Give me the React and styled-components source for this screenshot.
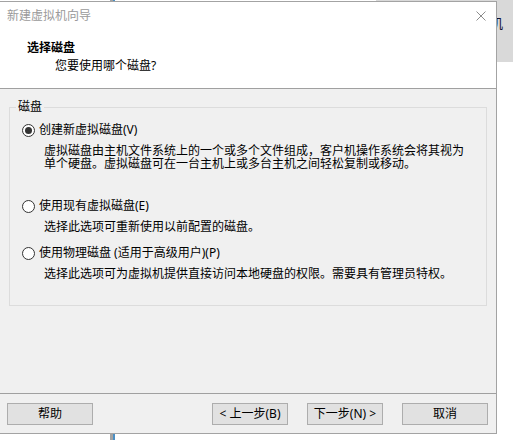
import React from 'react';
import styled, { createGlobalStyle } from 'styled-components';

const GlobalStyle = createGlobalStyle`
  html, body {
    margin: 0;
    padding: 0;
    background: #ffffff;
  }
  body {
    font-family: "Noto Sans", "Noto Sans CJK SC", sans-serif;
    font-size: 12px;
    color: #000;
  }
`;

const Desktop = styled.div`
  position: relative;
  width: 513px;
  height: 440px;
  overflow: hidden;
  background: #ffffff;
`;

// window behind the dialog, top right
const BackWindow = styled.div`
  position: absolute;
  left: 376px;
  top: 0;
  width: 137px;
  height: 62px;
  box-sizing: border-box;
  padding: 15px 0 0 114px;
  background: #d9d9d9;
`;

const BackLabel = styled.span`
  font-size: 13px;
  line-height: 16px;
  color: #101030;
`;

const Splitter = styled.div`
  position: absolute;
  left: 110px;
  top: 0;
  width: 3px;
  height: 440px;
  background: #a3a3a3;
  border-right: 2px solid #4b8fc4;
`;

const Dialog = styled.div`
  position: absolute;
  left: 0;
  top: 1px;
  width: 497px;
  height: 433px;
  box-sizing: border-box;
  border: 1px solid #a3a3a3;
  border-left: none;
  background: #f0f0f0;
  display: flex;
  flex-direction: column;
`;

const Header = styled.div`
  height: 87px;
  box-sizing: border-box;
  background: #ffffff;
  border-bottom: 1px solid #a0a0a0;
`;

const TitleRow = styled.div`
  height: 28px;
  display: flex;
  align-items: center;
  justify-content: space-between;
  padding: 0 10px 0 7px;
`;

const Title = styled.span`
  color: #9a9a9a;
  line-height: 28px;
`;

const Heading = styled.div`
  margin: 10px 0 0 27px;
  font-weight: 700;
  line-height: 16px;
`;

const SubHeading = styled.div`
  margin: 2px 0 0 55px;
  line-height: 16px;
`;

const Body = styled.div`
  flex: 1;
  padding: 10px 0 0 9px;
`;

const Group = styled.fieldset`
  margin: 0;
  padding: 0;
  width: 478px;
  box-sizing: border-box;
  border: 1px solid #dcdcdc;
  min-inline-size: 0;
`;

const Legend = styled.legend`
  margin-left: 6px;
  padding: 0 2px;
  line-height: 16px;
`;

const OptionList = styled.div`
  padding: 7px 12px 25px 12px;
`;

const OptionRow = styled.label`
  display: flex;
  align-items: center;
  gap: 4px;
  height: 16px;
  margin-top: ${p => p.$gap || 0}px;
  line-height: 16px;
`;

const RadioCircle = styled.span`
  width: 13px;
  height: 13px;
  box-sizing: border-box;
  border: 1px solid #333333;
  border-radius: 50%;
  background: #ffffff;
  display: flex;
  align-items: center;
  justify-content: center;
  flex-shrink: 0;

  &::after {
    content: '';
    width: 7px;
    height: 7px;
    border-radius: 50%;
    background: #333333;
    display: ${p => (p.$checked ? 'block' : 'none')};
  }
`;

const Desc = styled.div`
  margin: 6px 0 0 22px;
  line-height: 13px;
  white-space: pre-line;
`;

const Footer = styled.div`
  height: 40px;
  box-sizing: border-box;
  border-top: 1px solid #a0a0a0;
  padding: 9px 8px 0 7px;
  display: flex;
  align-items: flex-start;
`;

const NavGroup = styled.div`
  margin-left: auto;
  display: flex;
  gap: 19px;
`;

const Button = styled.button`
  width: ${p => p.$w}px;
  height: 22px;
  box-sizing: border-box;
  padding: 0;
  border: 1px solid #adadad;
  background: #e1e1e1;
  font-family: inherit;
  font-size: 12px;
  line-height: 20px;
  color: #000;
`;

const CloseIcon = () => (
  <svg width="10" height="10" viewBox="0 0 10 10">
    <path d="M0.5 0.5 L9.5 9.5 M9.5 0.5 L0.5 9.5" stroke="#8c8c8c" strokeWidth="1" fill="none" />
  </svg>
);

const options = [
  {
    label: '创建新虚拟磁盘(V)',
    desc: '虚拟磁盘由主机文件系统上的一个或多个文件组成，客户机操作系统会将其视为\n单个硬盘。虚拟磁盘可在一台主机上或多台主机之间轻松复制或移动。',
    checked: true,
    gap: 0,
  },
  {
    label: '使用现有虚拟磁盘(E)',
    desc: '选择此选项可重新使用以前配置的磁盘。',
    gap: 28,
  },
  {
    label: '使用物理磁盘 (适用于高级用户)(P)',
    desc: '选择此选项可为虚拟机提供直接访问本地硬盘的权限。需要具有管理员特权。',
    gap: 12,
  },
];

export default function App() {
  return (
    <>
      <GlobalStyle />
      <Desktop>
        <Splitter />
        <BackWindow>
          <BackLabel>机</BackLabel>
        </BackWindow>
        <Dialog>
          <Header>
            <TitleRow>
              <Title>新建虚拟机向导</Title>
              <CloseIcon />
            </TitleRow>
            <Heading>选择磁盘</Heading>
            <SubHeading>您要使用哪个磁盘?</SubHeading>
          </Header>
          <Body>
            <Group>
              <Legend>磁盘</Legend>
              <OptionList>
                {options.map((o, i) => (
                  <div key={i}>
                    <OptionRow $gap={o.gap}>
                      <RadioCircle $checked={o.checked} />
                      {o.label}
                    </OptionRow>
                    <Desc>{o.desc}</Desc>
                  </div>
                ))}
              </OptionList>
            </Group>
          </Body>
          <Footer>
            <Button $w={86}>帮助</Button>
            <NavGroup>
              <Button $w={76}>&lt; 上一步(B)</Button>
              <Button $w={76}>下一步(N) &gt;</Button>
              <Button $w={86}>取消</Button>
            </NavGroup>
          </Footer>
        </Dialog>
      </Desktop>
    </>
  );
}
